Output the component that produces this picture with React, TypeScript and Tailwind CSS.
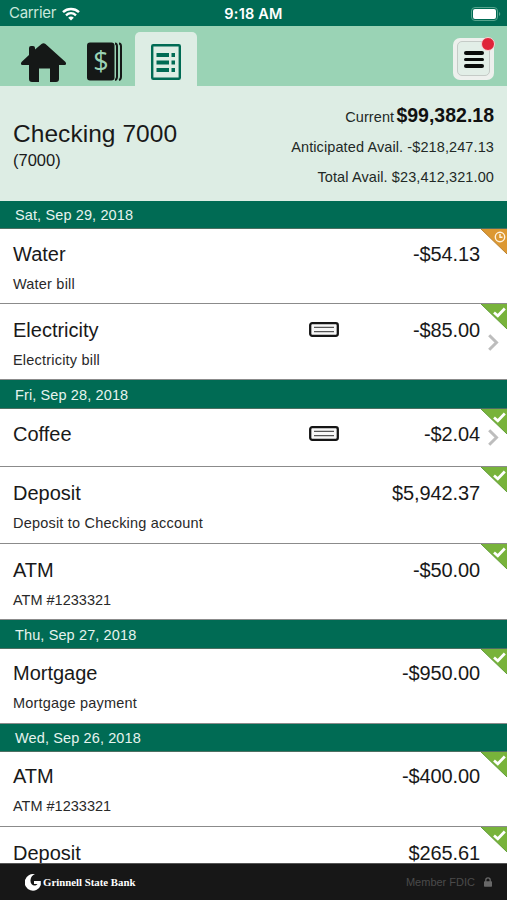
import { clsx } from "clsx"

type Transaction = {
  name: string
  amount: string
  memo?: string
  status: "pending" | "cleared"
  check?: boolean
  box: string
}

const days: { date: string; bar: string; items: Transaction[] }[] = [
  {
    date: "Sat, Sep 29, 2018",
    bar: "h-7",
    items: [
      { name: "Water", amount: "-$54.13", memo: "Water bill", status: "pending", box: "h-[75px] pt-[13px]" },
      { name: "Electricity", amount: "-$85.00", memo: "Electricity bill", status: "cleared", check: true, box: "h-[76px] pt-[14px]" },
    ],
  },
  {
    date: "Fri, Sep 28, 2018",
    bar: "h-[29px]",
    items: [
      { name: "Coffee", amount: "-$2.04", status: "cleared", check: true, box: "h-[58px] pt-[13px]" },
      { name: "Deposit", amount: "$5,942.37", memo: "Deposit to Checking account", status: "cleared", box: "h-[77px] pt-[14px]" },
      { name: "ATM", amount: "-$50.00", memo: "ATM #1233321", status: "cleared", box: "h-[76px] pt-[14px]" },
    ],
  },
  {
    date: "Thu, Sep 27, 2018",
    bar: "h-[29px]",
    items: [
      { name: "Mortgage", amount: "-$950.00", memo: "Mortgage payment", status: "cleared", box: "h-[75px] pt-[12px]" },
    ],
  },
  {
    date: "Wed, Sep 26, 2018",
    bar: "h-7",
    items: [
      { name: "ATM", amount: "-$400.00", memo: "ATM #1233321", status: "cleared", box: "h-[75px] pt-[12px]" },
      { name: "Deposit", amount: "$265.61", status: "cleared", box: "h-[77px] pt-[14px]" },
    ],
  },
]

export default function App() {
  return (
    <div className="flex h-[900px] w-[507px] flex-col overflow-hidden bg-white font-['Liberation_Sans',Arial,sans-serif] text-[#191919]">
      <StatusBar />
      <NavBar />
      <AccountHeader />
      <main className="min-h-0 flex-1 overflow-hidden">
        {days.map((day) => (
          <section key={day.date}>
            <h2
              className={clsx(
                "flex items-center border-b border-[#4d6f62] bg-[#006b54] pl-[15px] pt-[3px] text-[14.5px] tracking-[0.12px] text-[#e6f3ee]",
                day.bar
              )}
            >
              {day.date}
            </h2>
            {day.items.map((item) => (
              <TransactionRow key={item.name} item={item} />
            ))}
          </section>
        ))}
      </main>
      <Footer />
    </div>
  )
}

function StatusBar() {
  return (
    <div className="grid h-[26px] shrink-0 grid-cols-3 items-center bg-[#006b54] pl-[9px] pr-[6px] pt-px font-[Inter,sans-serif] text-[15px]">
      <div className="flex items-center gap-[6px] text-[#c9e8dc]">
        <span className="tracking-[-0.3px]">Carrier</span>
        <svg className="h-[14px] w-[18px]" viewBox="0 0 18 14" fill="none" stroke="#fff">
          <path d="M1 5.1C5.5.9 12.5.9 17 5.1" strokeWidth="2.5" />
          <path d="M4 8.3c3-2.700 7-2.700 10 0" strokeWidth="2.4" />
          <path d="M9 13.5 6.2 10.7c1.5-1.5 4.1-1.5 5.600 0z" fill="#fff" stroke="none" />
        </svg>
      </div>
      <div className="-ml-[3px] text-center text-[14.5px] font-semibold tracking-[0.2px] text-white">9:18 AM</div>
      <svg className="h-[14px] w-[30px] justify-self-end" viewBox="0 0 30 14">
        <rect x=".5" y=".5" width="26" height="13" rx="3.5" fill="none" stroke="#55a48d" />
        <rect x="2" y="2" width="23" height="10" rx="2" fill="#fff" />
        <path d="M28 5c1.7.6 1.7 3.4 0 4z" fill="#55a48d" />
      </svg>
    </div>
  )
}

function NavBar() {
  return (
    <nav className="flex h-[60px] shrink-0 items-end bg-[#9ad3b5]">
      <button className="flex h-[54px] w-[87px] items-center justify-center">
        <svg className="mt-[6px] h-[39px] w-[45px]" viewBox="0 0 45 39" fill="#151817">
          <path d="M20.500 1q2-1.500 4 0L44.500 19q1.500 3-1 3H38v14q0 3-3 3h-6V25.500H18V39h-7q-3 0-3-3V22H1.500q-2.500 0-1-3L8 12V5q0-2 2-2h2q2 0 2 2v1.500z" />
        </svg>
      </button>
      <button className="flex h-[54px] w-[48px] items-center pt-[5px]">
        <svg className="h-[39px] w-[36px]" viewBox="0 0 36 39">
          <rect x="0" y=".5" width="27.500" height="38" rx="3" fill="#151817" />
          <path d="M28 1.500q2 0 2 3v30q0 3-2 3.500M32 1.500q2 0 2 3v30q0 3-2 3.500" fill="none" stroke="#151817" strokeWidth="2" />
          <text x="14" y="29" textAnchor="middle" fontFamily="Open Sans, sans-serif" fontSize="27" fill="#9ad3b5">$</text>
        </svg>
      </button>
      <button className="flex h-[54px] w-[62px] items-center justify-center rounded-t-[5px] bg-[#ddede4]">
        <svg className="mt-[6px] h-[36px] w-[30px]" viewBox="0 0 30 36" fill="#006b54">
          <rect x="1.200" y="1.200" width="27.600" height="33.600" rx="1" fill="none" stroke="#006b54" strokeWidth="2.400" />
          <path d="M5.500 9h12.500v4H5.500zM20.500 9h3.500v4h-3.500zM5.500 16.500h12.500v4H5.500zM20.500 16.500h3.500v4h-3.500zM5.500 24h12.500v4H5.500zM20.500 24h3.500v4h-3.500z" />
        </svg>
      </button>
      <button className="relative mb-[6px] ml-auto mr-[13px] flex h-[42px] w-[41px] justify-center rounded-[7px] bg-[#edf0ed] pt-[3px]">
        <span className="flex h-[35px] w-[33px] flex-col items-center justify-center gap-[3px] rounded-[5px] border border-[#c5cbc7] bg-[#e2eee7] pt-[2px]">
          <span className="h-[3.5px] w-5 rounded-full bg-[#090b0a]" />
          <span className="h-[3.5px] w-5 rounded-full bg-[#090b0a]" />
          <span className="h-[3.5px] w-5 rounded-full bg-[#090b0a]" />
        </span>
        <span className="absolute -right-px -top-px h-[14px] w-[14px] rounded-full border border-[#f4d5d5] bg-[#df2439]" />
      </button>
    </nav>
  )
}

function AccountHeader() {
  return (
    <header className="flex h-[115px] shrink-0 justify-between bg-[#ddede4] pl-[13px] pr-[13px]">
      <div className="pt-[34px]">
        <h1 className="text-[24.5px] leading-[28px] tracking-[0.05px]">Checking 7000</h1>
        <p className="text-[16.5px] leading-[24px]">(7000)</p>
      </div>
      <div className="flex flex-col items-end pt-[14px] text-[14.5px] tracking-[0.1px] text-[#222926]">
        <p className="leading-[30px]">
          Current <b className="-ml-[2px] text-[19.5px] tracking-normal text-[#111]">$99,382.18</b>
        </p>
        <p className="leading-[31px]">Anticipated Avail. -$218,247.13</p>
        <p className="leading-[29px]">Total Avail. $23,412,321.00</p>
      </div>
    </header>
  )
}

function TransactionRow({ item }: { item: Transaction }) {
  return (
    <article className={clsx("relative border-b border-[#8b8b8b] bg-white pl-[13px] pr-[27px]", item.box)}>
      <div className="flex h-6 items-center text-[20px]">
        <h3>{item.name}</h3>
        {item.check && (
          <svg
            className={clsx("absolute left-[309px] h-[15px] w-[30px]", item.memo ? "top-[18px]" : "top-[17px]")}
            viewBox="0 0 30 15"
          >
            <rect x="1.2" y="1.2" width="27.6" height="12.6" rx="2" fill="#f7f7f7" stroke="#151515" strokeWidth="2.3" />
            <path d="M5 5.3h20M5 9.600h20" stroke="#555" strokeWidth="1.3" />
          </svg>
        )}
        <span className="ml-auto tracking-[-0.12px]">{item.amount}</span>
      </div>
      {item.memo && (
        <p
          className={clsx(
            "mt-[9px] text-[14.5px] leading-[18px] text-[#292929]",
            item.name === "ATM" ? "tracking-normal" : "tracking-[0.2px]"
          )}
        >
          {item.memo}
        </p>
      )}
      <StatusCorner status={item.status} />
      {item.check && (
        <svg
          className={clsx("absolute right-[8px] h-[17px] w-[11px]", item.memo ? "top-[30px]" : "top-[20px]")}
          viewBox="0 0 11 17"
          fill="none"
          stroke="#bdbdbd"
          strokeWidth="3"
        >
          <path d="m1.200 1.200 7.300 7.300-7.300 7.300" />
        </svg>
      )}
    </article>
  )
}

function StatusCorner({ status }: { status: Transaction["status"] }) {
  const pending = status === "pending"

  return (
    <svg className="absolute right-0 top-0 h-[25px] w-[26px]" viewBox="0 0 26 25" fill="none">
      <path d="M0 0h26v25z" fill={pending ? "#dc9832" : "#78b33b"} />
      <path d="m0 0 26 25" stroke={pending ? "#b78132" : "#609c38"} />
      {pending ? (
        <g stroke="#fff3df" strokeWidth="1.4">
          <circle cx="19" cy="8" r="4.7" />
          <path d="M19 5v3.300h2.500" />
        </g>
      ) : (
        <path d="m13 8.500 3.800 3.300 7-7.300" stroke="#fff" strokeWidth="2.7" />
      )}
    </svg>
  )
}

function Footer() {
  return (
    <footer className="flex h-[37px] shrink-0 items-center justify-between border-t border-[#555] bg-[#171717] pl-[25px] pr-[15px]">
      <div className="flex items-center gap-[2px] text-white">
        <svg className="h-[17px] w-[16px]" viewBox="0 0 16 17" fill="#fff">
          <path d="M10 .3A8.300 8.300 0 1 0 15.800 11V7H9v3h3.500C9.500 13.500 5 10.500 5.500 6 5.800 3 7.500 1 10 .3z" />
        </svg>
        <span className="font-['Liberation_Serif',serif] text-[10.8px] font-bold">Grinnell State Bank</span>
      </div>
      <div className="flex items-center gap-[9px] text-[11px] text-[#4b4b4b]">
        <span>Member FDIC</span>
        <svg className="h-[10px] w-[8px]" viewBox="0 0 8 10" fill="#686868">
          <rect y="4.3" width="8" height="5.5" rx=".7" />
          <path d="M1.8 5V3a2.200 2.200 0 0 1 4.400 0v2" fill="none" stroke="#686868" strokeWidth="1.3" />
        </svg>
      </div>
    </footer>
  )
}
